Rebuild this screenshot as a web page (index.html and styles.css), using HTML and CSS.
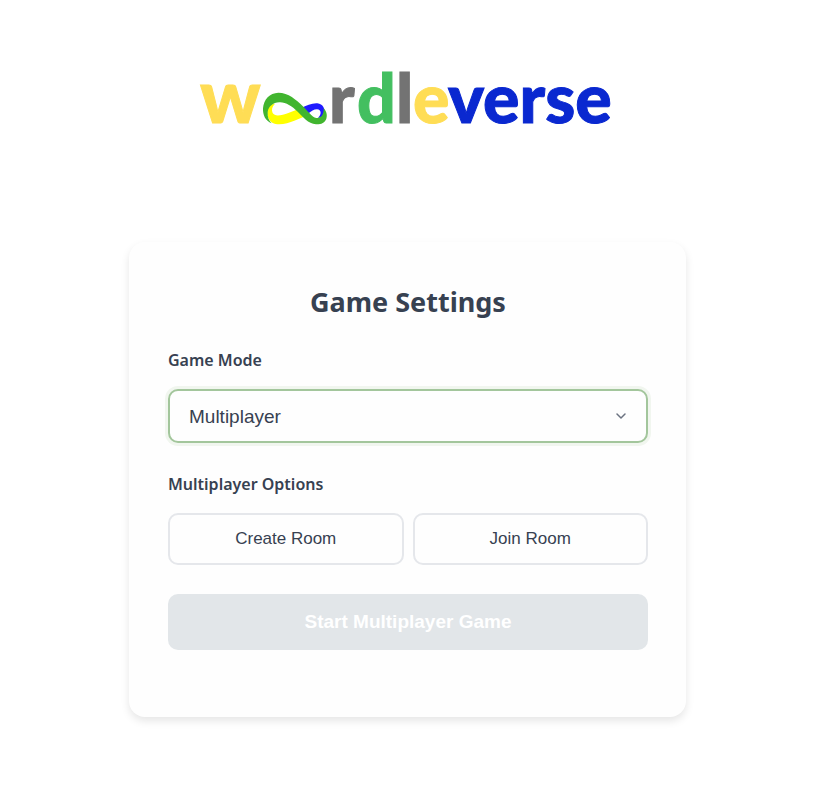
FILE: index.html
```html
<!DOCTYPE html>
<html lang="en">
<head>
<meta charset="utf-8">
<meta name="viewport" content="width=device-width, initial-scale=1">
<title>Wordleverse</title>
<link rel="stylesheet" href="styles.css">
</head>
<body>
<main class="page">
  <header class="brand">
    <svg class="logo" viewBox="-4 -16 420 104" role="img" aria-label="wordleverse">
      <g class="logo-text">
        <text class="yellow wide" x="0" y="63">w</text>
        <text class="gray" x="129" y="63">r</text>
        <text class="green" x="157" y="63">d</text>
        <text class="gray" x="196" y="63">l</text>
        <text class="yellow" x="213" y="63">e</text>
        <text class="blue" x="248" y="63">verse</text>
      </g>
      <g transform="translate(55 25) scale(0.3333)">
        <path fill="#ffff00" d="M42 60C32 77 36 103 52 113C70 123 98 115 118 107L154 92L131 72L100 84C80 91 60 96 53 84C49 75 51 64 60 56Z"/>
        <path fill="#1f1aff" d="M138 70C155 61 171 54 187 55C204 57 212 72 207 86L200 98L189 98C200 90 200 74 186 73C176 73 170 79 158 87Z"/>
        <path fill="#41b52f" d="M50 115C31 108 23 90 24 70C26 43 44 24 70 23C100 23 124 45 142 62C157 76 171 96 184 99C197 101 207 90 206 70C214 77 218 91 214 101C210 113 197 119 183 118C159 115 144 96 128 80C110 63 92 51 73 52C54 53 40 64 38 82C37 97 42 108 50 115Z"/>
      </g>
    </svg>
  </header>
  <form class="card">
    <h1 class="title">Game Settings</h1>
    <div class="field">
      <label class="label" for="mode">Game Mode</label>
      <div class="select-wrap">
        <select class="select" id="mode">
          <option>Multiplayer</option>
          <option>Single Player</option>
        </select>
        <svg class="chevron" viewBox="0 0 16 16" aria-hidden="true"><path d="M4 6l4 4 4-4"/></svg>
      </div>
    </div>
    <div class="field" role="group" aria-labelledby="options">
      <div class="label" id="options">Multiplayer Options</div>
      <div class="options">
        <button class="option" type="button">Create Room</button>
        <button class="option" type="button">Join Room</button>
      </div>
    </div>
    <button class="start" type="submit" disabled>Start Multiplayer Game</button>
  </form>
</main>
</body>
</html>
```

FILE: styles.css
```css
* {
  box-sizing: border-box;
}

body {
  margin: 0;
  background: #fff;
  color: #374151;
  font-family: "Noto Sans", "Open Sans", sans-serif;
}

.page {
  display: flex;
  flex-direction: column;
  align-items: center;
  gap: 94px;
  padding: 44px 18px 40px 16px;
}

.brand {
  width: 100%;
  max-width: 424px;
}

.logo {
  display: block;
  width: 100%;
  max-width: 420px;
}

.logo-text {
  font-family: Lato, sans-serif;
  font-size: 68px;
  font-weight: 900;
  stroke-width: 1;
}

.wide { font-size: 75px; }
.yellow { fill: #ffdd55; stroke: #ffdd55; }
.gray { fill: #737373; stroke: #737373; }
.green { fill: #43bf60; stroke: #43bf60; }
.blue { fill: #0a28d0; stroke: #0a28d0; }

.card {
  width: 100%;
  max-width: 557px;
  padding: 40px 38px 67px 39px;
  border-radius: 16px;
  background: #fefefe;
  box-shadow: 0 4px 8px rgba(0, 0, 0, 0.1);
}

.title {
  margin: 0 0 26px;
  font-size: 27px;
  line-height: 40px;
  font-weight: 700;
  text-align: center;
}

.field {
  margin-bottom: 29px;
}

.label {
  display: block;
  margin-bottom: 17px;
  font-size: 16px;
  line-height: 24px;
  font-weight: 600;
}

.select-wrap {
  position: relative;
}

.select {
  display: block;
  width: 100%;
  height: 54px;
  padding: 0 44px 0 19px;
  border: 2px solid #a3c69c;
  border-radius: 10px;
  outline: none;
  appearance: none;
  background: #fefefe;
  box-shadow: 0 0 0 3px #f1f6ef;
  color: inherit;
  font: 19px "Liberation Sans", sans-serif;
}

.chevron {
  position: absolute;
  top: 19px;
  right: 19px;
  width: 16px;
  height: 16px;
  fill: none;
  stroke: #6b7280;
  stroke-width: 1.5;
  stroke-linecap: round;
  stroke-linejoin: round;
  pointer-events: none;
}

.options {
  display: grid;
  grid-template-columns: 1fr 1fr;
  gap: 9px;
}

.option {
  height: 52px;
  padding: 0 16px;
  border: 2px solid #e5e7eb;
  border-radius: 10px;
  background: #fefefe;
  color: inherit;
  font: 17px "Liberation Sans", sans-serif;
}

.start {
  display: block;
  width: 100%;
  height: 56px;
  border: 0;
  border-radius: 10px;
  background: #e2e6e9;
  color: #fff;
  font: bold 19px "Liberation Sans", sans-serif;
}
```
